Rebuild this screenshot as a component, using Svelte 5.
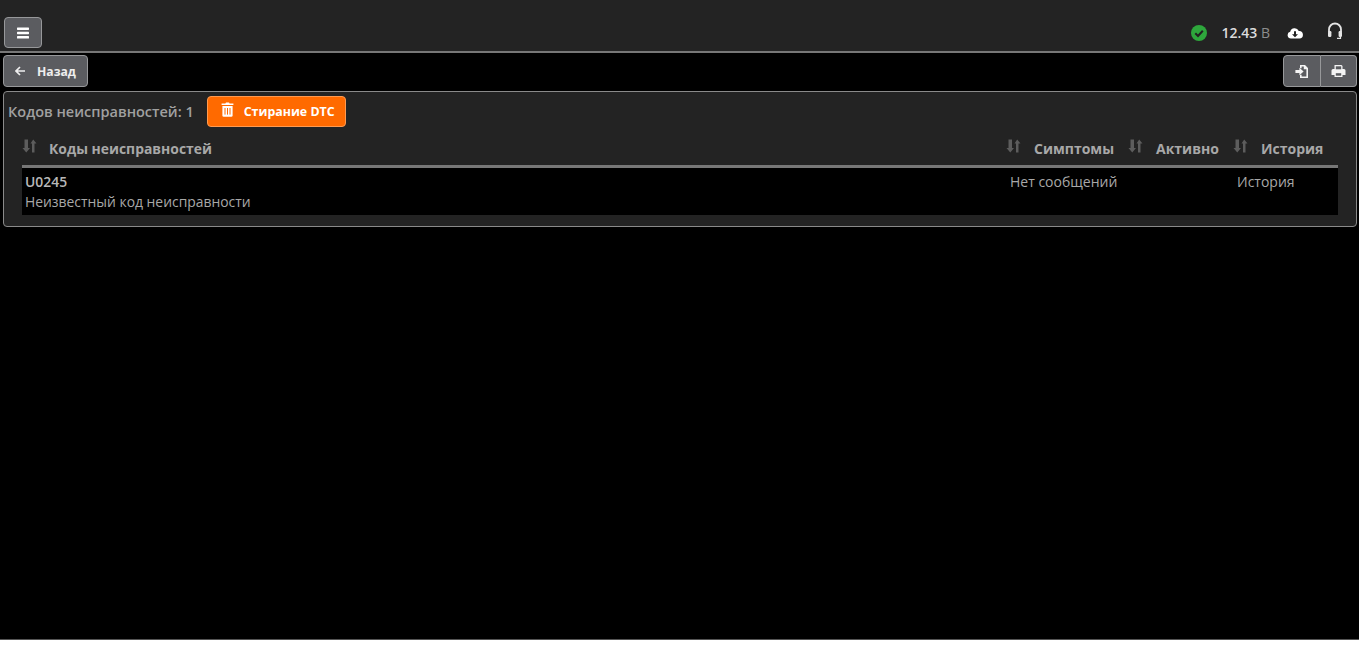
<script lang="ts">
	type Col = { label: string; cls: string };

	const columns: Col[] = [
		{ label: 'Коды неисправностей', cls: 'col-code' },
		{ label: 'Симптомы', cls: 'col-symptoms' },
		{ label: 'Активно', cls: 'col-active' },
		{ label: 'История', cls: 'col-history' }
	];
</script>

<div class="page">
	<header class="topbar">
		<button class="btn menu-btn" aria-label="Меню">
			<svg width="14" height="12" viewBox="0 0 14 12" fill="#fff">
				<rect x="1" y="0.5" width="12" height="2.4" rx="0.6" />
				<rect x="1" y="4.8" width="12" height="2.4" rx="0.6" />
				<rect x="1" y="9.1" width="12" height="2.4" rx="0.6" />
			</svg>
		</button>
		<div class="status">
			<svg class="ok" width="16" height="16" viewBox="0 0 16 16">
				<circle cx="8" cy="8" r="8" fill="#2ea73c" />
				<path d="M4.3 8.3 L7 11 L11.8 5.8" fill="none" stroke="#222" stroke-width="2" />
			</svg>
			<span class="volts"><b>12.43</b> В</span>
			<svg class="cloud" width="16" height="12" viewBox="0 0 16 12">
				<path
					d="M4 11.5 A3.4 3.4 0 0 1 3.2 4.8 A4.6 4.6 0 0 1 11.8 3.9 A3.8 3.8 0 0 1 12.4 11.5 Z"
					fill="#fff"
				/>
				<path d="M7 4.2 h2 v3 h2 l-3 3 l-3 -3 h2 Z" fill="#222" />
			</svg>
			<svg class="headset" width="16" height="18" viewBox="0 0 16 18" fill="none">
				<path d="M2 10 V7.5 A6 6 0 0 1 14 7.5 V10" stroke="#e4e4e4" stroke-width="1.8" />
				<rect x="1" y="9" width="3.4" height="6" rx="1.2" fill="#e4e4e4" />
				<rect x="11.6" y="9" width="3.4" height="6" rx="1.2" fill="#e4e4e4" />
				<path d="M13.5 15 V16.4 H10" stroke="#e4e4e4" stroke-width="1.2" />
			</svg>
		</div>
	</header>

	<div class="toolbar">
		<button class="btn back-btn">
			<svg width="10" height="10" viewBox="0 0 10 10" fill="none" stroke="#eee" stroke-width="1.7">
				<path d="M10 5 H1.5 M5 1 L1 5 L5 9" />
			</svg>
			<span>Назад</span>
		</button>
		<div class="btn-group">
			<button class="btn group-btn" aria-label="Экспорт">
				<svg width="16" height="15" viewBox="0 0 16 15">
					<path d="M6 1 H11 L14 4 V14 H6 V10.8 H7.6 V12.4 H12.4 V5.2 H9.8 V2.6 H7.6 V4.2 H6 Z" fill="#f4f4f4" />
					<path d="M1.4 6 H5.4 V3.8 L9.6 7.5 L5.4 11.2 V9 H1.4 Z" fill="#f4f4f4" />
				</svg>
			</button>
			<button class="btn group-btn" aria-label="Печать">
				<svg width="15" height="14" viewBox="0 0 15 14">
					<path
						d="M3.5 1 H10.5 L11.5 2 V5 H13 A1.5 1.5 0 0 1 14.5 6.5 V11 H11.5 V13 H3.5 V11 H0.5 V6.5 A1.5 1.5 0 0 1 2 5 H3.5 Z"
						fill="#f4f4f4"
					/>
					<rect x="4.8" y="2.3" width="5.4" height="3" fill="#5b5c60" />
					<rect x="4.8" y="9.2" width="5.4" height="2.5" fill="#5b5c60" />
				</svg>
			</button>
		</div>
	</div>

	<section class="panel">
		<div class="panel-head">
			<span class="count">Кодов неисправностей: 1</span>
			<button class="erase-btn">
				<svg width="13" height="15" viewBox="0 0 13 15">
					<path d="M4.4 1.4 L5 0.4 H8 L8.6 1.4 H12.4 V3 H0.6 V1.4 Z" fill="#fff" />
					<path
						d="M1.4 4 H11.6 V13.4 A1.3 1.3 0 0 1 10.3 14.7 H2.7 A1.3 1.3 0 0 1 1.4 13.4 Z"
						fill="#fff"
					/>
					<path d="M4 6 V12.6 M6.5 6 V12.6 M9 6 V12.6" stroke="#ff6a00" stroke-width="1" />
				</svg>
				<span>Стирание DTC</span>
			</button>
		</div>

		<div class="table">
			<div class="row head">
				{#each columns as col}
					<div class="th {col.cls}">
						<svg class="sort" width="15" height="14" viewBox="0 0 15 14" fill="#5d5d5d">
							<path d="M0.5 9 H2.5 V0.5 H6 V9 H8 L4.25 13.5 Z" />
							<path d="M8.5 4.5 H10 V13.5 H12.5 V4.5 H14.5 L11.2 0.5 Z" />
						</svg>
						<span>{col.label}</span>
					</div>
				{/each}
			</div>
			<div class="row body">
				<div class="td col-code">
					<b>U0245</b>
					<span>Неизвестный код неисправности</span>
				</div>
				<div class="td col-symptoms">Нет сообщений</div>
				<div class="td col-active"></div>
				<div class="td col-history">История</div>
			</div>
		</div>
	</section>

	<div class="spacer"></div>
</div>

<style>
	:global(body) {
		margin: 0;
		background: #fff;
	}

	.page {
		height: 640px;
		box-sizing: border-box;
		background: #000;
		border-bottom: 1px solid #555;
		display: flex;
		flex-direction: column;
		font-family: 'Open Sans', sans-serif;
		font-size: 14px;
		color: #b4b4b4;
		overflow: hidden;
	}

	.topbar {
		box-sizing: border-box;
		flex: none;
		background: #232323;
		border-bottom: 2px solid #777;
		height: 53px;
		padding: 17px 16px 0 4px;
		display: flex;
		justify-content: space-between;
		align-items: flex-start;
	}

	.btn {
		box-sizing: border-box;
		background: #5b5c60;
		border: 1px solid #97989a;
		border-radius: 4px;
		padding: 0;
		display: flex;
		align-items: center;
		justify-content: center;
		color: #eee;
		font-family: inherit;
	}

	.menu-btn {
		width: 38px;
		height: 31px;
	}

	.status {
		display: flex;
		align-items: center;
		height: 31px;
	}

	.ok {
		margin-right: 14px;
	}

	.volts {
		color: #8d8d8d;
		font-size: 14px;
		margin-right: 17px;
		white-space: nowrap;
	}

	.volts b {
		color: #dcdcdc;
		font-weight: 600;
	}

	.cloud {
		margin-right: 24px;
	}

	.headset {
		margin-top: -3px;
	}

	.toolbar {
		flex: none;
		display: flex;
		justify-content: space-between;
		padding: 2px 2px 0 3px;
		height: 36px;
		box-sizing: border-box;
	}

	.back-btn {
		width: 85px;
		height: 32px;
		gap: 12px;
		font-size: 12.2px;
		font-weight: 700;
	}

	.back-btn svg {
		margin-top: -1px;
	}

	.btn-group {
		display: flex;
	}

	.group-btn {
		height: 32px;
	}

	.group-btn:first-child {
		border-radius: 4px 0 0 4px;
		width: 38px;
	}

	.group-btn:last-child {
		border-radius: 0 4px 4px 0;
		border-left: none;
		width: 36px;
	}

	.panel {
		flex: none;
		margin: 2px 2px 0 3px;
		height: 136px;
		box-sizing: border-box;
		background: #232323;
		border: 1px solid #8a8a8a;
		border-radius: 4px;
		padding: 4px 18px 0 4px;
	}

	.panel-head {
		display: flex;
		align-items: center;
		height: 31px;
	}

	.count {
		font-size: 14.5px;
		font-weight: 600;
		color: #a0a0a0;
		margin-right: 13px;
	}

	.erase-btn {
		box-sizing: border-box;
		width: 139px;
		height: 31px;
		background: #ff6a00;
		border: 1px solid #ff9a50;
		border-radius: 4px;
		display: flex;
		align-items: center;
		gap: 10px;
		padding: 0 0 0 13px;
		color: #fff;
		font-family: inherit;
		font-size: 12.4px;
		font-weight: 700;
	}

	.erase-btn svg {
		margin-top: -4px;
	}

	.table {
		margin-left: 14px;
		margin-top: 5px;
	}

	.row {
		display: grid;
		grid-template-columns: 984px 122px 105px 1fr;
	}

	.head {
		height: 33px;
		border-bottom: 3px solid #777;
	}

	.th {
		display: flex;
		align-items: center;
		gap: 13px;
		font-weight: 700;
		font-size: 14px;
		color: #a8a8a8;
		white-space: nowrap;
	}

	.th.col-code {
		gap: 12px;
		font-size: 13.9px;
	}

	.sort {
		margin-top: -6px;
	}

	.body {
		background: #000;
		height: 47px;
		box-sizing: border-box;
		padding-top: 4px;
		line-height: 20px;
	}

	.td {
		padding-left: 4px;
		color: #a8a8a8;
		white-space: nowrap;
	}

	.td.col-code {
		padding-left: 3px;
		font-size: 13.9px;
	}

	.td b {
		display: block;
		font-weight: 600;
		color: #b8b8b8;
	}

	.td span {
		display: block;
	}

	.spacer {
		flex: 1;
	}
</style>
